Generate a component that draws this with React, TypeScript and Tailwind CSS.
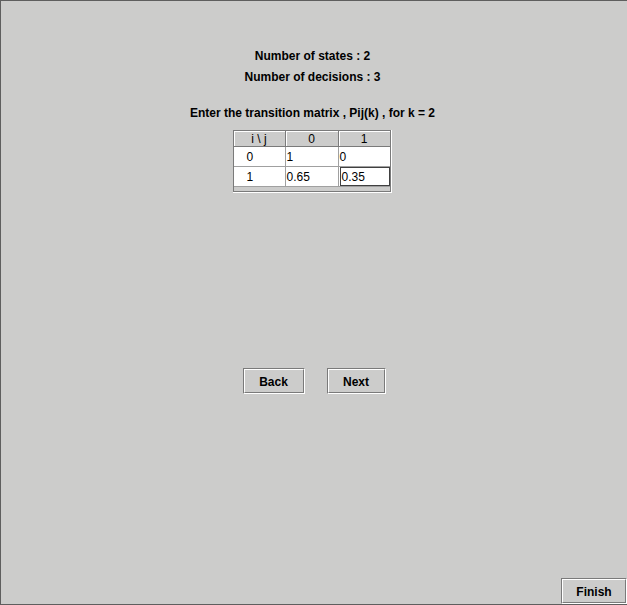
import React from "react";

const HEADERS = ["i \\ j", "0", "1"];

const ROWS = [
  ["0", "1", "0"],
  ["1", "0.65", "0.35"],
];

function MetalButton({ label, width }: { label: string; width: string }) {
  return (
    <div className={`${width} h-[26px] border-t border-l border-[#7a7a7a] border-r border-b border-r-white border-b-white`}>
      <div className="h-full w-full border-t border-l border-white border-r border-b border-r-[#7a7a7a] border-b-[#7a7a7a] flex items-center justify-center pt-[1px] text-[12px] font-bold text-black">
        {label}
      </div>
    </div>
  );
}

export default function App() {
  return (
    <div
      className="w-[627px] h-[605px] bg-[#cccccb] border-l border-t border-b border-[#5e5e5e] flex flex-col items-center text-black"
      style={{ fontFamily: '"Liberation Sans", Arial, sans-serif' }}
    >
      {/* labels */}
      <p className="mr-[3px] mt-[48px] text-[12px] leading-[14px] font-bold">Number of states : 2</p>
      <p className="mr-[3px] mt-[7px] text-[12px] leading-[14px] font-bold">Number of decisions : 3</p>
      <p className="mr-[3px] mt-[22px] text-[12px] leading-[14px] font-bold">
        Enter the transition matrix , Pij(k) , for k = 2
      </p>

      {/* matrix */}
      <div className="mr-[4px] mt-[10px] border-r border-b border-white">
        <div className="w-[158px] border border-[#7a7a7a] bg-[#cccccb]">
          <div className="grid grid-cols-[52px_53px_51px] border-b border-[#7a7a7a]">
            {HEADERS.map((h, i) => (
              <div
                key={h}
                className={`h-[15px] flex items-center justify-center text-[12px] leading-none shadow-[inset_1px_1px_0_#ffffff] ${
                  i < 2 ? "border-r border-[#7a7a7a]" : ""
                }`}
              >
                {h}
              </div>
            ))}
          </div>
          {ROWS.map((row, r) => (
            <div key={r} className="grid grid-cols-[52px_53px_51px] bg-white border-b border-[#a0a0a0]">
              {row.map((cell, c) => {
                const editing = r === 1 && c === 2;
                return (
                  <div
                    key={c}
                    className={`h-[19px] flex items-center text-[12px] leading-none ${
                      c < 2 ? "border-r border-[#a0a0a0]" : ""
                    } ${c === 0 ? "pl-[13px]" : "pl-[1px]"}`}
                  >
                    {editing ? (
                      <div className="h-[19px] w-full border border-[#404040] flex items-end pb-[2px] pl-[1px]">
                        {cell}
                      </div>
                    ) : (
                      cell
                    )}
                  </div>
                );
              })}
            </div>
          ))}
          <div className="h-[4px]" />
        </div>
      </div>

      {/* navigation */}
      <div className="mt-[175px] flex gap-[22px]">
        <MetalButton label="Back" width="w-[62px]" />
        <MetalButton label="Next" width="w-[59px]" />
      </div>

      <div className="flex-1" />
      <div className="self-end">
        <MetalButton label="Finish" width="w-[66px]" />
      </div>
    </div>
  );
}
